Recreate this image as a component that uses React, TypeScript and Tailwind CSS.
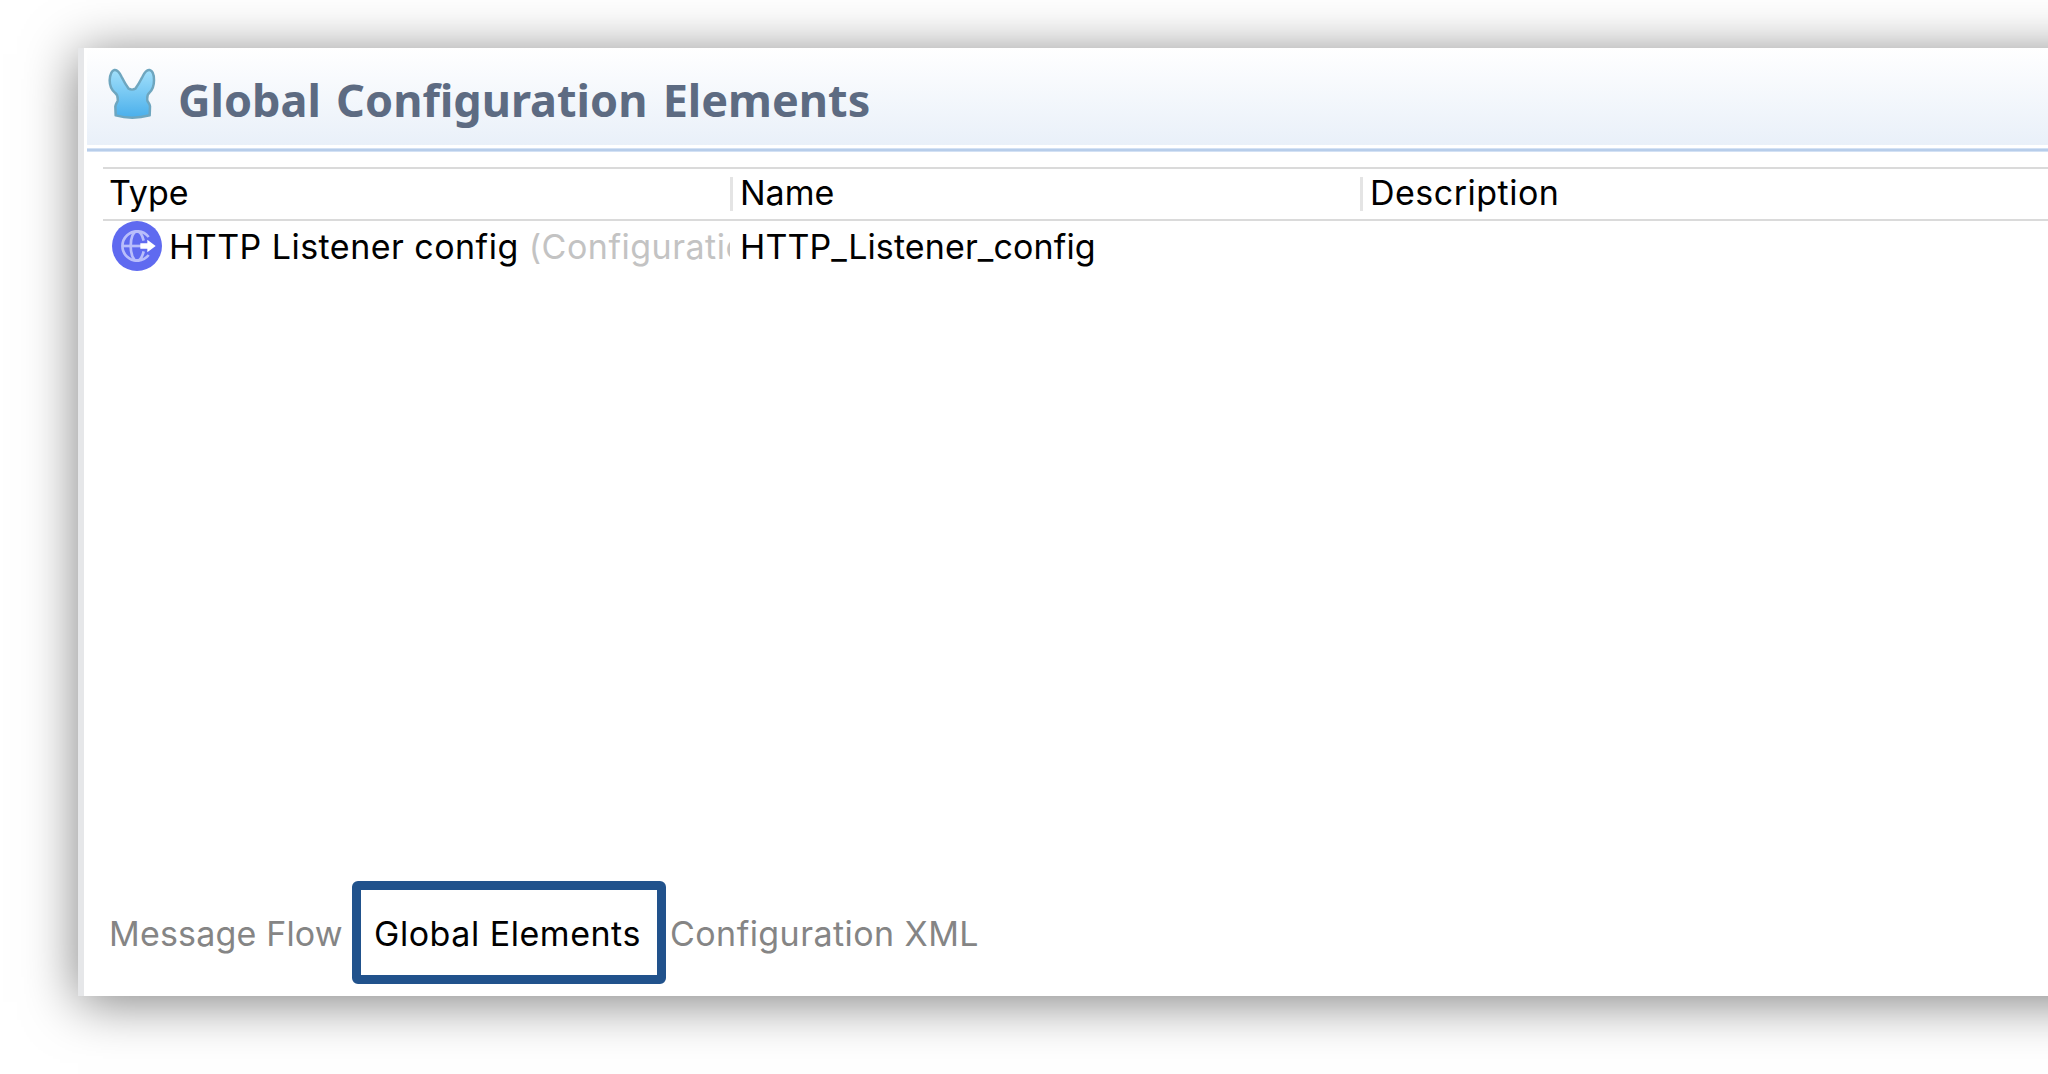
function RabbitIcon() {
  return (
    <svg viewBox="54 39 144 156" className="h-[52px] w-[48px]" fill="none">
      <defs>
        <linearGradient id="rabbit" x1="0" y1="40" x2="0" y2="190" gradientUnits="userSpaceOnUse">
          <stop offset="0" stopColor="#a4e1fb" />
          <stop offset="0.5" stopColor="#77c8f3" />
          <stop offset="1" stopColor="#48aeeb" />
        </linearGradient>
      </defs>
      <path
        d="M73 45 C82 43 89 53 95 66 C102 80 108 90 116 101 C121 104 131 104 136 101 C144 90 150 80 157 66 C163 53 170 43 179 45 C188 47 192 62 192 76 C192 92 189 104 178 113 C171 118 171 127 172 137 C174 142 180 147 180 154 L179 181 Q126 195 77 181 L76 154 C77 147 82 142 83 137 C84 127 82 118 75 113 C63 104 59 92 59 76 C60 62 64 47 73 45 Z"
        fill="url(#rabbit)"
        stroke="#6ea6bf"
        strokeWidth="7.5"
        strokeLinejoin="round"
      />
    </svg>
  );
}

function ListenerIcon() {
  return (
    <svg viewBox="0 0 150 150" className="h-[50px] w-[50px] shrink-0" fill="none">
      <circle cx="75" cy="75" r="75" fill="#5f6af0" />
      <g stroke="#b9befb" strokeWidth="8">
        <path d="M110 48 A44 44 0 1 0 110 102" />
        <path d="M95 59 C91 43 84 31 75 31 C64 31 56 50 56 75 C56 100 64 119 75 119 C84 119 91 107 95 91" />
        <path d="M31 75 H90" />
      </g>
      <path d="M85 67 H106 V56 L131 75 L106 94 V83 H85 Z" fill="#fff" />
    </svg>
  );
}

export default function App() {
  return (
    <div className="h-[1074px] w-full overflow-hidden bg-white pt-12 pl-[78px] font-['Inter','Liberation_Sans',sans-serif] text-[34px] text-black">
      <main className="flex h-[948px] w-[2100px] flex-col border-l-[6px] border-[#e6e7e9] bg-white shadow-[0_6px_50px_rgba(0,0,0,0.5)]">
        <header className="ml-[3px] flex h-[97px] shrink-0 items-start bg-linear-to-b from-white to-[#e9f0f9] pl-[21px]">
          <div className="mt-5">
            <RabbitIcon />
          </div>
          <h1 className="mt-[21px] ml-[22px] font-['Noto_Sans','Open_Sans',sans-serif] text-[45px] leading-[62px] font-bold whitespace-nowrap text-[#5d6b82] [word-spacing:3.5px]">
            Global Configuration Elements
          </h1>
        </header>
        <div className="mt-[3px] ml-[3px] h-1 shrink-0 border-y border-[#d3e1f4] bg-[#b7cdea]" />

        <section className="mt-[15px] ml-[19px] flex-1">
          <div className="flex h-[54px] border-y-2 border-[#dadada] leading-[47px]">
            <div className="w-[627px] pl-[6px]">Type</div>
            <div className="flex w-[630px]">
              <span className="mt-2 h-[34px] w-[3px] bg-[#e4e4e4]" />
              <span className="pl-[7px]">Name</span>
            </div>
            <div className="flex">
              <span className="mt-2 h-[34px] w-[3px] bg-[#e4e4e4]" />
              <span className="pl-[7px] tracking-[0.5px]">Description</span>
            </div>
          </div>
          <div className="flex leading-[51px]">
            <div className="flex w-[627px] overflow-hidden pl-[9px] whitespace-nowrap">
              <ListenerIcon />
              <span className="pl-[7px] tracking-[0.47px]">HTTP Listener config</span>
              <span className="pl-[10px] tracking-[0.5px] text-[#c3c3c3]">(Configuration)</span>
            </div>
            <div className="pl-[10px] tracking-[0.12px]">HTTP_Listener_config</div>
          </div>
        </section>

        <nav className="mb-3 ml-[25px] flex h-[103px] shrink-0 items-center whitespace-nowrap text-[#858585]">
          <div className="w-[243px] pt-0.5 tracking-[0.18px]">Message Flow</div>
          <div className="h-[103px] w-[314px] rounded-md border-[9px] border-[#21528c] pt-px pl-[13px] leading-[85px] tracking-[0.53px] text-black">
            Global Elements
          </div>
          <div className="pt-0.5 pl-1 tracking-[0.44px]">Configuration XML</div>
        </nav>
      </main>
    </div>
  );
}
